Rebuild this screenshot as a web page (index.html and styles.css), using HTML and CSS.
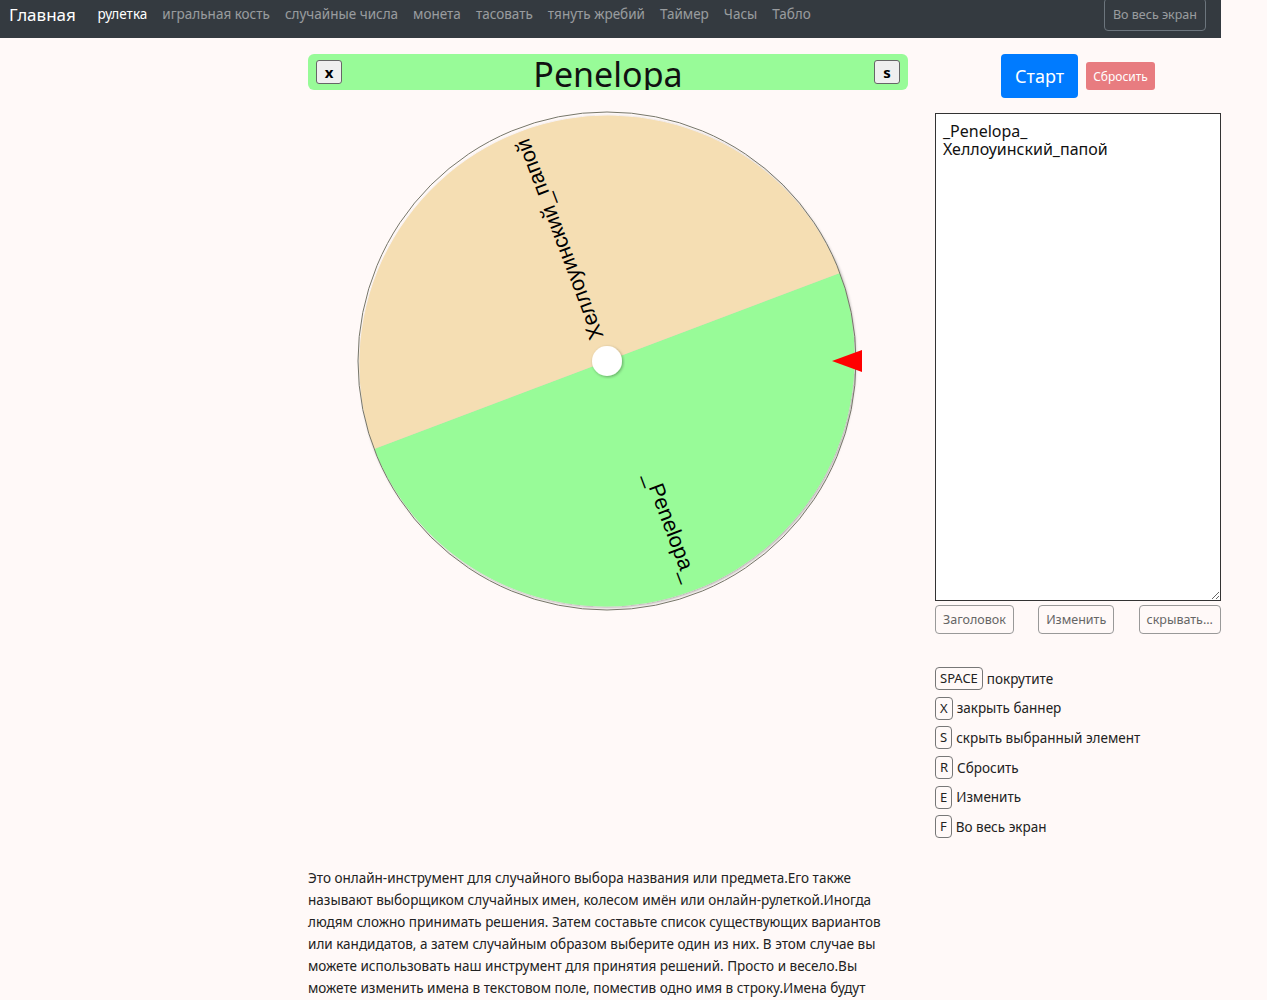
FILE: index.html
```
<!doctype html>
<html>
<head>
<meta charset="utf-8">
<title>Рулетка</title>
<link rel="stylesheet" href="styles.css">
</head>
<body>

<nav class="topbar">
    <a class="brand" href="#">Главная</a>
    <a class="navlink active" href="#">рулетка</a>
    <a class="navlink" href="#">игральная кость</a>
    <a class="navlink" href="#">случайные числа</a>
    <a class="navlink" href="#">монета</a>
    <a class="navlink" href="#">тасовать</a>
    <a class="navlink" href="#">тянуть жребий</a>
    <a class="navlink" href="#">Таймер</a>
    <a class="navlink" href="#">Часы</a>
    <a class="navlink" href="#">Табло</a>
    <button class="fullbtn">Во весь экран</button>
</nav>

<main class="page">

    <section class="wheelcol">
        <div class="banner">
            <button class="keybtn">x</button>
            <span class="winner">Penelopa</span>
            <button class="keybtn">s</button>
        </div>

        <svg class="wheel" width="600" height="500" viewBox="0 0 600 500">
            <defs>
                <filter id="shade" x="-10%" y="-10%" width="120%" height="120%">
                    <feDropShadow dx="1" dy="1" stdDeviation="1.5" flood-color="#000" flood-opacity="0.35"/>
                </filter>
            </defs>
            <g filter="url(#shade)">
                <path d="M299,250 L531.9,162 A249,249 0 0 1 66.1,338 Z" fill="#98fb98"/>
                <path d="M299,250 L66.1,338 A249,249 0 0 1 531.9,162 Z" fill="#f5deb3"/>
            </g>
            <circle cx="299" cy="250" r="249" fill="none" stroke="#77776a" stroke-width="1"/>
            <g transform="rotate(-110.7 299 250)">
                <text x="536" y="250" class="slice" text-anchor="end" dominant-baseline="middle">Хеллоуинский_папой</text>
            </g>
            <g transform="rotate(69.3 299 250)">
                <text x="534" y="250" class="slice" text-anchor="end" dominant-baseline="middle">_Penelopa_</text>
            </g>
            <circle cx="299" cy="250" r="15" fill="#fff" filter="url(#shade)"/>
            <polygon points="524,250 554,239 554,261" fill="#ff0000"/>
        </svg>

        <p class="about">Это онлайн-инструмент для случайного выбора названия или предмета.Его также называют выборщиком случайных имен, колесом имён или онлайн-рулеткой.Иногда людям сложно принимать решения. Затем составьте список существующих вариантов или кандидатов, а затем случайным образом выберите один из них. В этом случае вы можете использовать наш инструмент для принятия решений. Просто и весело.Вы можете изменить имена в текстовом поле, поместив одно имя в строку.Имена будут перемешаны и расположены по кругу.</p>
    </section>

    <aside class="sidecol">
        <div class="actions">
            <button class="startbtn">Старт</button>
            <button class="resetbtn">Сбросить</button>
        </div>

        <textarea class="names">_Penelopa_
Хеллоуинский_папой</textarea>

        <div class="tools">
            <button class="toolbtn">Заголовок</button>
            <button class="toolbtn">Изменить</button>
            <button class="toolbtn">скрывать...</button>
        </div>

        <ul class="keys">
            <li><kbd>SPACE</kbd> покрутите</li>
            <li><kbd>X</kbd> закрыть баннер</li>
            <li><kbd>S</kbd> скрыть выбранный элемент</li>
            <li><kbd>R</kbd> Сбросить</li>
            <li><kbd>E</kbd> Изменить</li>
            <li><kbd>F</kbd> Во весь экран</li>
        </ul>
    </aside>

</main>

</body>
</html>
```

FILE: styles.css
```
html, body { margin: 0; padding: 0; }
body { background-color: #fff9f8; font-family: "Noto Sans", "Open Sans", sans-serif; color: #212529; }
button { font-family: "Noto Sans", "Open Sans", sans-serif; cursor: pointer; }

.topbar { width: 1221px; height: 38px; box-sizing: border-box; display: flex; align-items: flex-start; padding: 4px 0 0 9px; background-color: #343a40; position: relative; }
.brand { font-size: 17px; line-height: 22px; color: #fff; text-decoration: none; margin-right: 14px; }
.navlink { font-size: 13.5px; line-height: 20px; color: rgba(255,255,255,0.5); text-decoration: none; padding: 0 7.5px; }
.navlink.active { color: #fff; }
.fullbtn { position: absolute; right: 15px; top: -2px; height: 33px; padding: 0 8px; background: transparent; border: 1px solid #6c757d; border-radius: 4px; color: rgba(255,255,255,0.5); font-size: 12.5px; }

.page { display: grid; grid-template-columns: 600px 286px; column-gap: 27px; padding-left: 308px; }

.banner { margin-top: 16px; height: 36px; border-radius: 6px; background-color: #98fb98; display: flex; align-items: flex-start; justify-content: space-between; padding: 0 8px; overflow: hidden; }
.winner { font-size: 34px; line-height: 40px; color: #111; margin-top: 0; }
.keybtn { margin-top: 6px; width: 26px; height: 24px; padding: 0; background-color: #efefef; border: 1px solid #666; border-radius: 3px; font-size: 15px; font-weight: bold; color: #000; }

.wheel { display: block; margin-top: 21px; }
.slice { font-family: "Liberation Sans", Arial, sans-serif; font-size: 21.5px; fill: #000; }

.about { margin: 256px 0 0; width: 582px; font-size: 13.5px; line-height: 22px; color: #222; }

.actions { margin-top: 16px; display: flex; justify-content: center; align-items: center; gap: 8px; }
.startbtn { height: 44px; padding: 0 14px; background-color: #007bff; border: 0; border-radius: 4px; color: #fff; font-size: 18px; }
.resetbtn { height: 28px; padding: 0 7px; background-color: #e87c80; border: 0; border-radius: 3px; color: #fff; font-size: 12px; }

.names { display: block; box-sizing: border-box; margin-top: 15px; width: 286px; height: 488px; padding: 8px 7px; border: 1px solid #333; font-family: "Noto Sans", sans-serif; font-size: 16px; line-height: 18px; color: #111; resize: vertical; background: #fff; }

.tools { margin-top: 4px; display: flex; justify-content: space-between; }
.toolbtn { height: 29px; padding: 0 7px; background: transparent; border: 1px solid #999; border-radius: 4px; color: #666; font-size: 12.5px; }

.keys { list-style: none; margin: 30px 0 0; padding: 0; }
.keys li { display: flex; align-items: center; gap: 4px; height: 29.6px; font-size: 13.5px; color: #222; }
.keys kbd { font-family: "Noto Sans", sans-serif; font-size: 13px; padding: 1px 4px; border: 1px solid #777; border-radius: 4px; line-height: 19px; }
```
